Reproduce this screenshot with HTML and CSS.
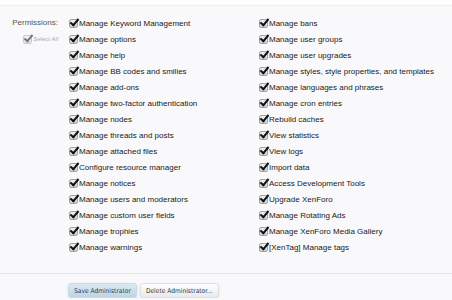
FILE: index.html
```html
<!DOCTYPE html>
<html lang="en">
<head>
    <meta charset="UTF-8">
    <title>Edit Administrator</title>
    <link rel="stylesheet" href="styles.css">
</head>
<body>
    <div class="topbar"></div>
    <form class="admin-form">
        <div class="perm-row">
            <div class="perm-label">
                <div class="label-text">Permissions:</div>
                <label class="select-all"><span class="cb"></span>Select All</label>
            </div>
            <ul class="perm-list" id="permList"></ul>
        </div>

        <div class="submit-row">
            <button type="button" class="btn primary">Save Administrator</button>
            <button type="button" class="btn">Delete Administrator...</button>
        </div>
    </form>

    <script>
        // left column first, then right column
        const perms = [
            'Manage Keyword Management', 'Manage bans',
            'Manage options', 'Manage user groups',
            'Manage help', 'Manage user upgrades',
            'Manage BB codes and smilies', 'Manage styles, style properties, and templates',
            'Manage add-ons', 'Manage languages and phrases',
            'Manage two-factor authentication', 'Manage cron entries',
            'Manage nodes', 'Rebuild caches',
            'Manage threads and posts', 'View statistics',
            'Manage attached files', 'View logs',
            'Configure resource manager', 'Import data',
            'Manage notices', 'Access Development Tools',
            'Manage users and moderators', 'Upgrade XenForo',
            'Manage custom user fields', 'Manage Rotating Ads',
            'Manage trophies', 'Manage XenForo Media Gallery',
            'Manage warnings', '[XenTag] Manage tags'
        ];

        const list = document.getElementById('permList');
        perms.forEach(function (name) {
            const li = document.createElement('li');
            li.innerHTML = '<span class="cb"></span>' + name;
            list.appendChild(li);
        });
    </script>
</body>
</html>
```

FILE: styles.css
```css
body {
    margin: 0;
    padding: 0;
    background-color: #f9f9fb;
    font-family: "Liberation Sans", Arial, sans-serif;
    font-size: 8px;
    color: #1a1a1a;
}
.topbar {
    height: 5px;
    background: #fdfdfe;
    border-bottom: 1px solid #efeff2;
}
.perm-row {
    display: grid;
    grid-template-columns: 69px 1fr;
    padding-top: 9px;
}
.perm-label {
    text-align: right;
    padding-right: 11px;
}
.label-text {
    height: 16px;
    line-height: 16px;
    color: #555;
}
.select-all {
    display: flex;
    justify-content: flex-end;
    align-items: center;
    height: 16px;
    font-size: 6px;
    font-style: italic;
    color: #aaa;
}
.select-all .cb {
    opacity: 0.55;
}
.perm-list {
    list-style: none;
    margin: 0;
    padding: 0;
    display: grid;
    grid-template-columns: 190px 1fr;
}
.perm-list li {
    display: flex;
    align-items: center;
    height: 16px;
    white-space: nowrap;
}
.cb {
    position: relative;
    display: inline-block;
    width: 10px;
    height: 10px;
    margin-right: 0;
    flex-shrink: 0;
}
.cb::before {
    content: "";
    position: absolute;
    left: 0;
    bottom: 0;
    width: 7px;
    height: 7px;
    border: 1px solid #a5a5a5;
    border-radius: 2px;
    background: linear-gradient(#f2f2f2, #cfcfcf);
}
.cb::after {
    content: "";
    position: absolute;
    left: 3px;
    top: -1px;
    width: 3px;
    height: 7px;
    border-right: 2px solid #111;
    border-bottom: 2px solid #111;
    transform: rotate(40deg);
}
.submit-row {
    margin-top: 18px;
    border-top: 1px solid #e6e6ea;
    padding: 9px 0 0 68px;
    display: flex;
    gap: 3px;
}
.btn {
    font-family: "DejaVu Sans Condensed", "Liberation Sans", sans-serif;
    font-size: 6.6px;
    height: 15px;
    padding: 0 5px;
    border: 1px solid #e0e0e4;
    border-radius: 3px;
    color: #333;
    background: linear-gradient(#fefefe, #eaeaee);
    box-shadow: 0 1px 2px rgba(0, 0, 0, 0.15);
    cursor: pointer;
}
.btn.primary {
    color: #2a3d55;
    border-color: #c8dbe8;
    background: linear-gradient(#dbe9f3, #bcd5e6);
}
```
